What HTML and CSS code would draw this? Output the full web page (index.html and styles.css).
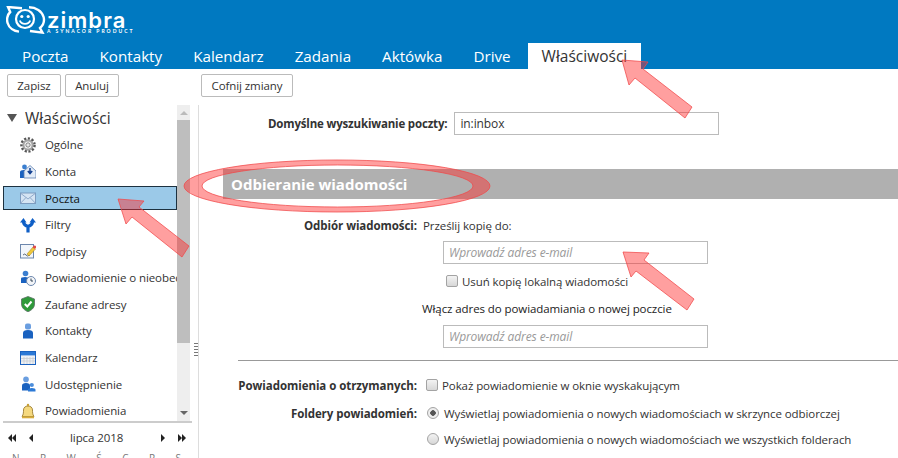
FILE: index.html
```html
<!DOCTYPE html>
<html lang="pl">
<head>
<meta charset="utf-8">
<title>Zimbra</title>
<link rel="stylesheet" href="styles.css">
</head>
<body>
<div class="app">
  <header class="banner">
    <svg class="logo-mark" viewBox="0 0 40 28" width="40" height="28">
      <path d="M16 2.2 L2 1 L4.2 6 C1 9 .6 14 1.6 17 C3 22 8 25 13 25.6" fill="none" stroke="#fff" stroke-width="2.4"/>
      <path d="M23 1.3 C30 1.3 36 5 37.6 11 C38.6 15 37.6 19 34 22 L36.5 26.6 L24 25" fill="none" stroke="#fff" stroke-width="2.4"/>
      <circle cx="19" cy="13" r="9" fill="none" stroke="#fff" stroke-width="2.2"/>
      <circle cx="15.8" cy="10.5" r="1.6" fill="#fff"/><circle cx="22.2" cy="10.5" r="1.6" fill="#fff"/>
      <path d="M13.8 14.5 C15.5 19 22.5 19 24.2 14.5" fill="none" stroke="#fff" stroke-width="1.9"/>
    </svg>
    <div class="logo-text">
      <span class="logo-name">zimbra</span>
      <span class="logo-sub">A SYNACOR PRODUCT</span>
    </div>
  </header>
  <nav class="tabs">
    <a class="tab">Poczta</a><a class="tab">Kontakty</a><a class="tab">Kalendarz</a><a class="tab">Zadania</a><a class="tab">Aktówka</a><a class="tab">Drive</a><a class="tab tab-active">Właściwości</a>
  </nav>
  <div class="toolbar">
    <button class="btn">Zapisz</button>
    <button class="btn">Anuluj</button>
    <button class="btn btn-undo">Cofnij zmiany</button>
  </div>
  <div class="main">
    <aside class="side">
      <div class="side-top">
        <div class="tree">
          <div class="tree-head"><span class="tree-caret"></span>Właściwości</div>
          <div class="tree-row">
            <svg class="ico" viewBox="0 0 16 16"><circle cx="8" cy="8" r="6.2" fill="none" stroke="#555" stroke-width="3.2" stroke-dasharray="2 1.54"/><circle cx="8" cy="8" r="4.6" fill="none" stroke="#a4a4a4" stroke-width="2.2"/><circle cx="8" cy="8" r="2.2" fill="#e6e6e6" stroke="#666" stroke-width=".8"/></svg>
            Ogólne</div>
          <div class="tree-row">
            <svg class="ico" viewBox="0 0 16 16"><circle cx="4.5" cy="4" r="2.4" fill="#3b7fd0"/><path d="M0 15 V9 Q0 7 4 7 L6 7 V15Z" fill="#1a62c0"/><path d="M4 8 L10 2.5 L16 8 V15 H4Z" fill="#e3ecf7" stroke="#5a7eb0" stroke-width=".8"/><path d="M10 5 V10 M7.8 8 L10 10.5 L12.2 8" stroke="#123f90" stroke-width="1.5" fill="none"/></svg>
            Konta</div>
          <div class="tree-row tree-selected">
            <svg class="ico" viewBox="0 0 16 16"><rect x=".5" y="3" width="15" height="10.5" fill="#d5e4f3" stroke="#7d9cc0"/><path d="M.5 3.2 L8 9 L15.5 3.2 M.5 13.3 L6 7.5 M15.5 13.3 L10 7.5" fill="none" stroke="#7d9cc0" stroke-width=".8"/></svg>
            Poczta</div>
          <div class="tree-row">
            <svg class="ico" viewBox="0 0 16 16"><path d="M8 15.5 V9 M8 9.5 C5 8.5 3.5 7 3.5 4.5 M8 9.5 C11 8.5 12.5 7 12.5 4.5" fill="none" stroke="#0f5fc6" stroke-width="3.2"/><path d="M0 5.5 L3.5 1 L6.5 5.5Z M9.5 5.5 L12.5 1 L16 5.5Z" fill="#0f5fc6"/></svg>
            Filtry</div>
          <div class="tree-row">
            <svg class="ico" viewBox="0 0 16 16"><rect x=".5" y="1.5" width="13" height="13.5" fill="#f2f6fb" stroke="#6c87ad"/><path d="M3 12 Q5 10 6 12 T10 12" fill="none" stroke="#345" stroke-width=".8"/><path d="M7 11 L13 4 L15.5 6 L9 13Z" fill="#f0c93c" stroke="#a07c18" stroke-width=".5"/><circle cx="14.5" cy="4" r="1.6" fill="#e24a4a"/></svg>
            Podpisy</div>
          <div class="tree-row">
            <svg class="ico" viewBox="0 0 16 16"><circle cx="5.5" cy="3.5" r="2.8" fill="#3b7fd0"/><path d="M1 13 V8.5 Q1 7 5 7 Q9 7 9 8.5 V13Z" fill="#1a62c0"/><circle cx="11" cy="11" r="4.5" fill="#f3f5f8" stroke="#6c87ad"/><path d="M11 8.5 V11 H13" fill="none" stroke="#345"/></svg>
            Powiadomienie o nieobecności</div>
          <div class="tree-row">
            <svg class="ico" viewBox="0 0 16 16"><path d="M8 .5 L14.5 3 V8 C14.5 12 11 14.5 8 15.8 C5 14.5 1.5 12 1.5 8 V3Z" fill="#2f9a3a" stroke="#5c6f66" stroke-width=".8"/><path d="M4.8 8 L7.3 10.5 L11.5 5.5" fill="none" stroke="#fff" stroke-width="2"/></svg>
            Zaufane adresy</div>
          <div class="tree-row">
            <svg class="ico" viewBox="0 0 16 16"><rect x="5" y=".5" width="6" height="6" rx="2" fill="#6a9ee0"/><path d="M3 15.5 V10 Q3 7 8 7 Q13 7 13 10 V15.5Z" fill="#1a62c0"/></svg>
            Kontakty</div>
          <div class="tree-row">
            <svg class="ico" viewBox="0 0 16 16"><rect x=".5" y="1.5" width="15" height="13" fill="#eef1f5" stroke="#1a62c0"/><rect x="1" y="2" width="14" height="3.4" fill="#2b79d6"/><path d="M4 7 V14 M7 7 V14 M10 7 V14 M13 7 V14 M1 8.5 H15 M1 11 H15" stroke="#c4c8ce" stroke-width=".7"/></svg>
            Kalendarz</div>
          <div class="tree-row">
            <svg class="ico" viewBox="0 0 16 16"><circle cx="6" cy="3.4" r="2.8" fill="#6a9ee0"/><path d="M2 14.5 V9.5 Q2 7 6 7 Q10 7 10 9.5 V14.5Z" fill="#1a62c0"/><circle cx="11.8" cy="9" r="2.1" fill="#4c8ddb"/><path d="M8 15.5 V13.8 Q8 12 11.8 12 Q15.5 12 15.5 13.8 V15.5Z" fill="#2b79d6"/></svg>
            Udostępnienie</div>
          <div class="tree-row">
            <svg class="ico" viewBox="0 0 16 16"><path d="M2 13.5 C3.5 11.5 3.5 9 3.5 7 C3.5 4.5 5.5 3 8 3 C10.5 3 12.5 4.5 12.5 7 C12.5 9 12.5 11.5 14 13.5Z" fill="#f5d97f" stroke="#8f6f20" stroke-width=".8"/><circle cx="8" cy="2" r="1.2" fill="#c79f35"/><rect x="2" y="13.5" width="12" height="1.8" fill="#d9ad3c"/></svg>
            Powiadomienia</div>
        </div>
        <div class="vscroll">
          <span class="arrow-up"></span>
          <span class="vthumb"></span>
          <span class="arrow-down"></span>
        </div>
      </div>
      <div class="cal">
        <div class="cal-head">
          <span class="cal-nav"><b class="tri-l"></b><b class="tri-l"></b></span>
          <span class="cal-nav cal-nav-prev"><b class="tri-l"></b></span>
          <span class="cal-title">lipca 2018</span>
          <span class="cal-nav cal-nav-next"><b class="tri-r"></b></span>
          <span class="cal-nav"><b class="tri-r"></b><b class="tri-r"></b></span>
        </div>
        <div class="cal-days"><span>N</span><span>P</span><span>W</span><span>Ś</span><span>C</span><span>P</span><span>S</span></div>
      </div>
    </aside>
    <div class="sash"><span class="grip"></span></div>
    <section class="content">
      <div class="search-row">
        <label class="lbl lbl-search">Domyślne wyszukiwanie poczty:</label>
        <input class="field field-search" type="text" value="in:inbox">
      </div>
      <h2 class="section-title">Odbieranie wiadomości</h2>
      <div class="form">
        <div class="row row-recv">
          <label class="lbl lbl-col">Odbiór wiadomości:</label>
          <span class="val">Prześlij kopię do:</span>
        </div>
        <input class="field field-mail" type="text" placeholder="Wprowadź adres e-mail">
        <div class="check-local"><span class="cb"></span><span class="val">Usuń kopię lokalną wiadomości</span></div>
        <div class="val notify-title">Włącz adres do powiadamiania o nowej poczcie</div>
        <input class="field field-mail" type="text" placeholder="Wprowadź adres e-mail">
      </div>
      <hr class="rule">
      <div class="form">
        <div class="row row-popup">
          <label class="lbl lbl-col">Powiadomienia o otrzymanych:</label>
          <span class="cb cb-popup"></span><span class="val">Pokaż powiadomienie w oknie wyskakującym</span>
        </div>
        <div class="row row-folder">
          <label class="lbl lbl-col">Foldery powiadomień:</label>
          <span class="radio radio-on"></span><span class="val">Wyświetlaj powiadomienia o nowych wiadomościach w skrzynce odbiorczej</span>
        </div>
        <div class="row row-folder2">
          <span class="radio"></span><span class="val">Wyświetlaj powiadomienia o nowych wiadomościach we wszystkich folderach</span>
        </div>
      </div>
    </section>
  </div>
  <svg class="annot" viewBox="0 0 898 458" width="898" height="458">
    <g class="annot-shapes">
      <path d="M622 60 L648 62 L643 69 L692 107 L685 118 L635 78 L629 85Z"/>
      <path d="M118 199 L144 201 L139 207 L189 246 L182 257 L132 217 L126 224Z"/>
      <path d="M623 252 L649 253 L644 260 L694 299 L687 310 L636 271 L631 277Z"/>
      <path fill-rule="evenodd" d="M184 186 A153 26 0 1 1 490 186 A153 26 0 1 1 184 186Z M202 186 A135.5 21 0 1 0 473 186 A135.5 21 0 1 0 202 186Z"/>
    </g>
  </svg>
</div>
</body>
</html>
```

FILE: styles.css
```css
* { box-sizing: border-box; }
html, body { margin: 0; height: 100%; overflow: hidden; }
body { font-family: "Open Sans", "Noto Sans", sans-serif; font-size: 11.5px; letter-spacing: -.085px; color: #333; background: #fff; }
.app { position: relative; width: 898px; height: 458px; overflow: hidden; display: flex; flex-direction: column; }

.banner { height: 43px; background: #0079c1; display: flex; align-items: flex-start; padding: 6px 0 0 6px; color: #fff; }
.logo-mark { flex: none; }
.logo-text { display: flex; flex-direction: column; margin: 5px 0 0 1px; }
.logo-name { font-family: Inter, sans-serif; font-size: 22px; line-height: 18px; height: 18px; letter-spacing: 1.1px; font-weight: 600; }
.logo-sub { font-family: Lato, sans-serif; font-size: 5px; line-height: 5px; font-weight: 700; letter-spacing: 2px; white-space: nowrap; }

.tabs { height: 26px; background: #0079c1; display: flex; align-items: stretch; padding-left: 6.5px; letter-spacing: 0; }
.tab { font-size: 15.2px; line-height: 26px; color: #fff; padding: 0 15.5px; }
.tab-active { background: #fff; color: #333; margin-left: 1.5px; padding: 0 0 0 14px; width: 113px; font-size: 15.5px; }

.toolbar { height: 36px; display: flex; align-items: flex-start; padding: 5px 0 0 7px; gap: 4px; }
.btn { width: 54px; height: 23px; padding: 0; font: 11.5px "Open Sans", sans-serif; letter-spacing: -.085px; color: #333; background: #fff; border: 1px solid #bbb; border-radius: 2px; }
.btn-undo { width: 92px; margin-left: 78px; }

.main { flex: 1; display: flex; min-height: 0; }
.side { width: 192px; flex: none; display: flex; flex-direction: column; height: 353px; }
.side-top { height: 318px; display: flex; border-bottom: 2px solid #ccc; margin-left: 3px; flex: none; }
.tree { width: 174px; flex: none; overflow: hidden; }
.tree-head { font-size: 15.5px; letter-spacing: 0; height: 27px; padding: 0 0 2px 4px; display: flex; align-items: center; color: #333; }
.tree-caret { width: 0; height: 0; border: 5px solid transparent; border-top: 8px solid #555; border-bottom: 0; margin-right: 8px; }
.tree-row { height: 26.6px; display: flex; align-items: center; padding: 0 0 1px 17px; gap: 9px; white-space: nowrap; color: #333; }
.ico { width: 16px; height: 16px; flex: none; }
.tree-selected { background: #9bc9e8; border: 1px solid #1d3140; height: 24px; margin: 1px 0 1.6px; padding: 0 0 0 16px; color: #111; }
.vscroll { width: 13px; background: #eee; display: flex; flex-direction: column; align-items: center; flex: none; margin-right: 2px; }
.arrow-up { width: 0; height: 0; margin: 6px 0 5px; border: 4px solid transparent; border-top: 0; border-bottom: 4px solid #bbb; flex: none; }
.vthumb { width: 13px; height: 223px; background: #bebebe; flex: none; }
.arrow-down { width: 0; height: 0; margin-top: auto; margin-bottom: 6px; border: 4px solid transparent; border-bottom: 0; border-top: 4px solid #666; }

.cal { margin-left: 3px; flex: 1; }
.cal-head { display: flex; align-items: center; height: 29px; padding: 0 6px 0 5px; }
.cal-nav { display: flex; flex: none; }
.cal-nav-prev { margin-left: 13px; }
.cal-nav-next { margin-left: auto; margin-right: 13px; }
.tri-l { width: 0; height: 0; border: 4px solid transparent; border-left: 0; border-right: 4px solid #222; }
.tri-r { width: 0; height: 0; border: 4px solid transparent; border-right: 0; border-left: 4px solid #222; }
.cal-title { margin-left: 37px; color: #333; }
.cal-days { display: flex; justify-content: space-between; padding: 0 11px 0 9px; font-size: 10px; line-height: 12px; color: #777; }

.sash { width: 6px; flex: none; display: flex; align-items: center; }
.grip { display: block; width: 4px; height: 13px; margin-left: 1.5px; margin-top: 136px; background: repeating-linear-gradient(#777 0 1px, transparent 1px 3px); }
.content { flex: 1; min-width: 0; border-left: 1px solid #ddd; position: relative; overflow: hidden; }

.search-row { display: flex; align-items: center; height: 23px; margin-top: 7px; padding-left: 69px; }
.lbl { font-weight: 700; color: #333; white-space: nowrap; letter-spacing: -.06px; }
.lbl-search { letter-spacing: -.17px; }
.field { border: 1px solid #bbb; height: 23px; font: 12px "Open Sans", sans-serif; letter-spacing: -.1px; padding: 0 5px; color: #333; outline: 0; background: #fff; }
.field::placeholder { color: #999; font-style: italic; opacity: 1; }
.field-search { width: 265px; margin-left: 7px; }
.field-mail { display: block; width: 265px; margin-left: 244px; }

.section-title { margin: 34px 0 0 24px; height: 30px; background: #b0b0b0; color: #fff; font-size: 15px; letter-spacing: 0; font-weight: 700; line-height: 31px; padding-left: 8px; }

.form { display: flex; flex-direction: column; }
.row { display: flex; align-items: center; height: 18px; white-space: nowrap; }
.lbl-col { width: 218px; text-align: right; flex: none; }
.val { color: #333; white-space: nowrap; }
.row-recv { margin-top: 17px; }
.row-recv .val { margin-left: 6px; }
.form .field-mail:first-of-type { margin-top: 7px; }
.check-local { display: flex; align-items: center; height: 18px; margin: 8px 0 0 247px; gap: 4px; }
.cb { display: block; width: 12px; height: 12px; flex: none; border: 1px solid #a3a3a3; border-radius: 2px; background: linear-gradient(#f3f3f3, #d7d7d7); }
.notify-title { margin: 10px 0 0 223px; height: 18px; line-height: 18px; color: #222; }
.form .notify-title + .field-mail { margin-top: 7px; }
.rule { margin: 12px 0 0 39px; border: 0; border-top: 1px solid #999; height: 0; }
.row-popup { margin-top: 15px; }
.cb-popup { margin: 0 4px 0 9px; }
.row-folder { margin-top: 10px; }
.row-folder2 { margin-top: 8px; padding-left: 228px; }
.radio { display: block; width: 12px; height: 12px; flex: none; border: 1px solid #a3a3a3; border-radius: 50%; background: linear-gradient(#f3f3f3, #d7d7d7); margin-right: 5px; }
.row-folder .radio { margin-left: 10px; }
.radio-on { background: radial-gradient(circle, #555 0 2.5px, #eee 3px); }

.annot { position: absolute; left: 0; top: 0; pointer-events: none; }
.annot-shapes path { fill: #ff2a2a; fill-opacity: .45; stroke: #f0484a; stroke-opacity: .75; stroke-width: 1; }
```
